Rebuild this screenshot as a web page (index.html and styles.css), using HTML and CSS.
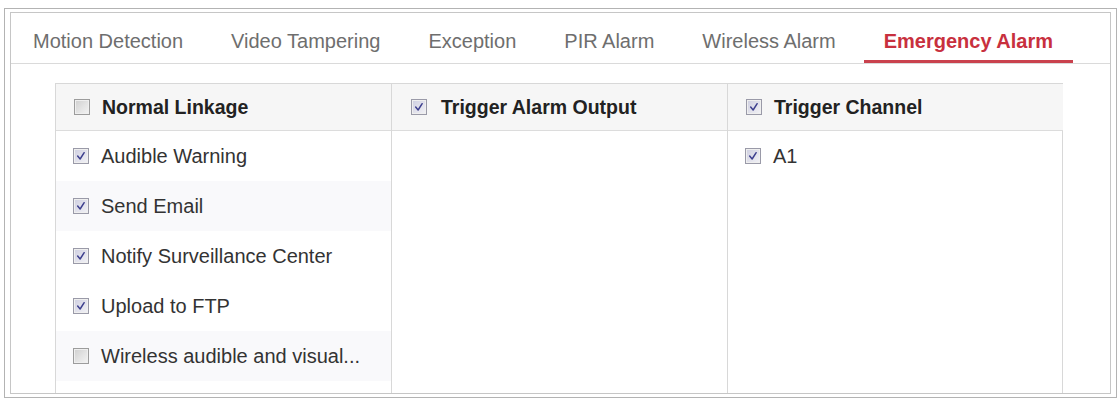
FILE: index.html
```html
<!DOCTYPE html>
<html>
<head>
<meta charset="utf-8">
<link rel="stylesheet" href="styles.css">
</head>
<body>
<div class="outer">
  <div class="inner">
    <div class="tabbar">
      <div class="tab">Motion Detection</div>
      <div class="tab">Video Tampering</div>
      <div class="tab">Exception</div>
      <div class="tab">PIR Alarm</div>
      <div class="tab">Wireless Alarm</div>
      <div class="tab active">Emergency Alarm</div>
    </div>
    <div class="table">
      <div class="col">
        <div class="head"><span class="cb"></span><span>Normal Linkage</span></div>
        <div class="row"><span class="cb on"><svg viewBox="0 0 16 16"><path d="M4.2 8 L7 11.4 L11.6 4.2"/></svg></span><span>Audible Warning</span></div>
        <div class="row shade"><span class="cb on"><svg viewBox="0 0 16 16"><path d="M4.2 8 L7 11.4 L11.6 4.2"/></svg></span><span>Send Email</span></div>
        <div class="row"><span class="cb on"><svg viewBox="0 0 16 16"><path d="M4.2 8 L7 11.4 L11.6 4.2"/></svg></span><span>Notify Surveillance Center</span></div>
        <div class="row"><span class="cb on"><svg viewBox="0 0 16 16"><path d="M4.2 8 L7 11.4 L11.6 4.2"/></svg></span><span>Upload to FTP</span></div>
        <div class="row shade"><span class="cb"></span><span>Wireless audible and visual...</span></div>
      </div>
      <div class="col">
        <div class="head head-mid"><span class="cb on"><svg viewBox="0 0 16 16"><path d="M4.2 8 L7 11.4 L11.6 4.2"/></svg></span><span>Trigger Alarm Output</span></div>
      </div>
      <div class="col">
        <div class="head"><span class="cb on"><svg viewBox="0 0 16 16"><path d="M4.2 8 L7 11.4 L11.6 4.2"/></svg></span><span>Trigger Channel</span></div>
        <div class="row"><span class="cb on"><svg viewBox="0 0 16 16"><path d="M4.2 8 L7 11.4 L11.6 4.2"/></svg></span><span>A1</span></div>
      </div>
    </div>
  </div>
</div>
</body>
</html>
```

FILE: styles.css
```css
html, body {
  margin: 0;
  padding: 0;
  background: #ffffff;
}
body {
  font-family: "Liberation Sans", Arial, sans-serif;
}
.outer {
  box-sizing: border-box;
  width: 1113px;
  height: 390px;
  margin: 8px 0 0 4px;
  border: 1px solid #b3b3b3;
  padding: 3px 5px 3px 5px;
}
.inner {
  box-sizing: border-box;
  height: 382px;
  border: 1px solid #c6c6c6;
  overflow: hidden;
}
.tabbar {
  display: flex;
  gap: 8px;
  height: 50px;
  border-bottom: 1px solid #dadada;
  padding-left: 2px;
}
.tab {
  padding: 17px 20px 0 20px;
  line-height: 23px;
  font-size: 20px;
  color: #6e6e6e;
  white-space: nowrap;
}
.tab.active {
  color: #c8303e;
  font-weight: bold;
  box-shadow: inset 0 -3px 0 #c9414d;
}
.table {
  display: grid;
  grid-template-columns: 335px 336px 336px;
  margin: 19px 0 0 44px;
  width: 1008px;
  height: 330px;
  border: 1px solid #d8d8d8;
  border-bottom: none;
  box-sizing: border-box;
}
.col + .col {
  border-left: 1px solid #d8d8d8;
}
.head {
  display: flex;
  align-items: center;
  height: 46px;
  padding-left: 18px;
  background: #f6f6f6;
  border-bottom: 1px solid #dcdcdc;
  font-size: 19.5px;
  font-weight: bold;
  color: #222222;
}
.head-mid {
  padding-left: 19px;
}
.head-mid .cb {
  margin-right: 14px;
}
.row {
  display: flex;
  align-items: center;
  height: 50px;
  padding-left: 17px;
  font-size: 20px;
  color: #333333;
}
.row.shade {
  background: #f9f9fb;
}
.cb {
  box-sizing: border-box;
  flex: none;
  width: 16px;
  height: 16px;
  margin-right: 12px;
  border: 1px solid #9c9c9c;
  background: linear-gradient(135deg, #cfcfcf 0%, #e4e4e4 55%, #f3f3f3 100%);
  box-shadow: inset 0 0 0 1px #efefef;
  display: flex;
}
.cb.on {
  background: linear-gradient(135deg, #cdcee0 0%, #e2e2ec 55%, #f2f2f6 100%);
  border-color: #9a9aa8;
}
.cb svg {
  width: 14px;
  height: 14px;
}
.cb svg path {
  fill: none;
  stroke: #3d3f8e;
  stroke-width: 1.7;
  stroke-linecap: round;
  stroke-linejoin: round;
}
```
